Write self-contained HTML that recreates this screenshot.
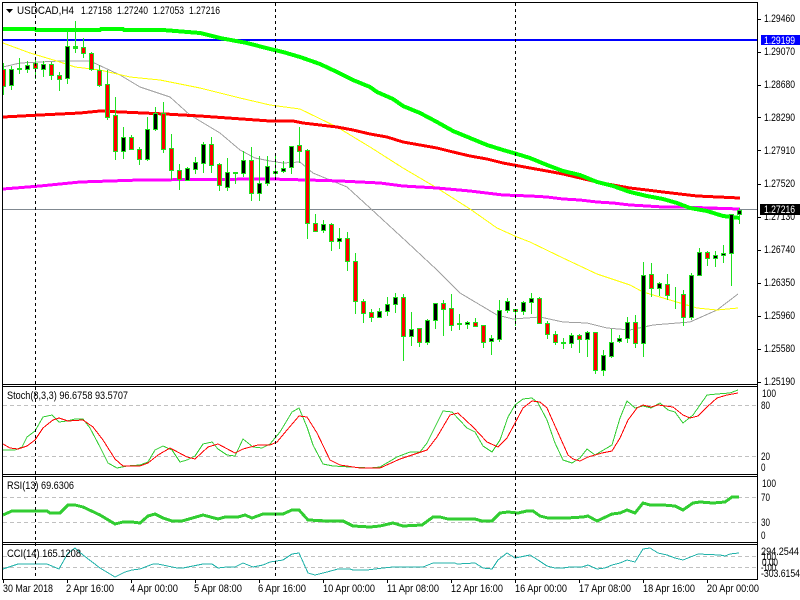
<!DOCTYPE html>
<html><head><meta charset="utf-8"><style>
html,body{margin:0;padding:0;background:#fff;width:800px;height:600px;overflow:hidden}
svg{display:block}
text{font-family:"Liberation Sans",sans-serif;font-size:11px;fill:#000}
</style></head><body>
<svg width="800" height="600" viewBox="0 0 800 600" xmlns="http://www.w3.org/2000/svg">
<rect width="800" height="600" fill="#fff"/>
<g fill="none" shape-rendering="crispEdges">
<path d="M3 405.5H757M3 456.5H757M3 497.5H757M3 522.5H757M3 556.5H757M3 567.5H757" stroke="#c0c0c0" stroke-dasharray="4 3"/>
<path d="M3 209.5H757" stroke="#808890"/>
<rect x="3" y="39" width="754" height="2" fill="#0000ff"/>
<polyline stroke="#a0a0a0" points="3,67 20,63 60,61 90,61 105,68 120,75 140,87 170,97 190,115 220,133 240,150 255,158 270,161 283,163 300,162 313,173 347,187 370,208 407,242 437,270 460,293 497,315 513,319 540,317 563,322 587,323 607,328 630,330 653,325 690,322 717,310 738,294"/>
<polyline stroke="#ffff00" points="3,43 30,53 60,62 75,67 100,70 130,77 160,80 200,88 240,98 270,105 300,109 337,127 370,147 403,168 437,188 470,209 497,228 517,237 530,242 563,258 597,274 630,285 643,292 670,300 697,308 717,310 738,308"/>
<polyline stroke="#ff00ff" stroke-width="3" points="3,189 40,186 80,182 140,180 270,179 307,180 340,181 380,183 403,186 437,188 470,191 503,195 530,196 547,197 563,199 580,200 597,202 613,203 630,205 647,206 663,207 680,207 740,209"/>
<polyline stroke="#ff0000" stroke-width="3" points="3,117 40,115 80,113 100,111 165,114 200,116 270,121 293,121 303,123 320,125 337,127 353,130 370,134 387,137 403,142 420,145 437,148 453,152 470,156 487,159 503,163 530,168 547,171 563,174 580,178 597,182 613,185 630,188 647,190 663,192 680,194 697,196 740,198"/>
<polyline stroke="#00ff00" stroke-width="4" points="3,29 35,29 36,30 100,30 101,29 123,29 124,30 163,30 200,33 220,38 247,43 270,49 283,52 300,57 320,64 337,72 353,80 370,87 377,92 393,99 403,106 420,113 437,122 453,131 470,138 487,145 503,150 517,154 530,158 547,165 563,171 580,175 597,182 613,186 630,192 647,196 663,199 677,203 690,208 707,211 723,216 740,218"/>
<path stroke="#1fe01f" d="M3.5 63V95M11.5 66V90M19.5 58V74M27.5 61V73M35.5 59V79M43.5 61V77M51.5 62V80M59.5 72V91M67.5 30V84M75.5 21V53M83.5 38V58M91.5 52V71M99.5 65V87M107.5 70V120M115.5 97V160M123.5 127V159M131.5 135V150M139.5 147V165M147.5 117V161M155.5 107V131M163.5 102V153M171.5 134V180M179.5 164V190M187.5 167V181M195.5 157V174M203.5 142V173M211.5 137V173M219.5 163V191M227.5 158V191M235.5 172V184M243.5 151V177M251.5 147V201M259.5 156V201M267.5 156V186M275.5 155V180M283.5 161V173M291.5 146V174M299.5 127V163M307.5 149V239M315.5 214V232M323.5 220V233M331.5 223V251M339.5 228V249M347.5 232V271M355.5 253V314M363.5 299V323M371.5 309V322M379.5 308V318M387.5 297V316M395.5 293V313M403.5 294V361M411.5 312V346M419.5 328V347M427.5 319V345M435.5 303V329M443.5 300V336M451.5 294V331M459.5 314V330M467.5 321V329M475.5 318V327M483.5 325V348M491.5 335V355M499.5 300V342M507.5 298V313M515.5 309V326M523.5 301V315M531.5 293V314M539.5 297V324M547.5 321V339M555.5 331V345M563.5 338V349M571.5 333V348M579.5 334V353M587.5 331V357M595.5 332V374M603.5 350V376M611.5 329V358M619.5 335V343M627.5 317V343M635.5 315V348M643.5 262V357M651.5 263V297M659.5 282V296M667.5 274V300M675.5 287V309M683.5 290V326M691.5 273V320M699.5 248V276M707.5 251V266M715.5 251V267M723.5 245V263M731.5 214V286M739.5 208V224"/>
<path stroke="#1fe01f" fill="#ff0000" d="M1.5 69.5h4V86.5h-4zM33.5 63.5h4V68.5h-4zM49.5 64.5h4V75.5h-4zM57.5 75.5h4V79.5h-4zM81.5 47.5h4V53.5h-4zM89.5 53.5h4V69.5h-4zM97.5 70.5h4V85.5h-4zM105.5 84.5h4V117.5h-4zM113.5 115.5h4V151.5h-4zM129.5 137.5h4V149.5h-4zM137.5 149.5h4V159.5h-4zM161.5 113.5h4V149.5h-4zM169.5 148.5h4V170.5h-4zM177.5 170.5h4V179.5h-4zM209.5 144.5h4V165.5h-4zM217.5 164.5h4V185.5h-4zM249.5 160.5h4V193.5h-4zM297.5 145.5h4V151.5h-4zM305.5 150.5h4V223.5h-4zM313.5 223.5h4V231.5h-4zM329.5 224.5h4V241.5h-4zM345.5 238.5h4V261.5h-4zM353.5 261.5h4V301.5h-4zM361.5 301.5h4V313.5h-4zM369.5 312.5h4V317.5h-4zM401.5 297.5h4V336.5h-4zM417.5 328.5h4V342.5h-4zM441.5 303.5h4V309.5h-4zM449.5 308.5h4V325.5h-4zM473.5 322.5h4V326.5h-4zM481.5 325.5h4V342.5h-4zM513.5 309.5h4V311.5h-4zM537.5 298.5h4V323.5h-4zM545.5 323.5h4V334.5h-4zM553.5 334.5h4V342.5h-4zM577.5 335.5h4V339.5h-4zM593.5 332.5h4V370.5h-4zM633.5 322.5h4V343.5h-4zM649.5 274.5h4V288.5h-4zM665.5 284.5h4V295.5h-4zM681.5 294.5h4V317.5h-4zM705.5 252.5h4V258.5h-4z"/>
<path stroke="#1fe01f" fill="#000" d="M9.5 69.5h4V85.5h-4zM25.5 65.5h4V69.5h-4zM41.5 64.5h4V69.5h-4zM65.5 46.5h4V78.5h-4zM121.5 137.5h4V151.5h-4zM145.5 129.5h4V159.5h-4zM153.5 113.5h4V129.5h-4zM185.5 168.5h4V180.5h-4zM193.5 162.5h4V169.5h-4zM201.5 144.5h4V163.5h-4zM225.5 172.5h4V187.5h-4zM241.5 160.5h4V173.5h-4zM257.5 183.5h4V193.5h-4zM265.5 166.5h4V183.5h-4zM273.5 171.5h4V173.5h-4zM281.5 168.5h4V171.5h-4zM289.5 146.5h4V167.5h-4zM321.5 224.5h4V230.5h-4zM337.5 238.5h4V241.5h-4zM377.5 311.5h4V317.5h-4zM385.5 304.5h4V311.5h-4zM393.5 297.5h4V304.5h-4zM409.5 329.5h4V336.5h-4zM425.5 320.5h4V342.5h-4zM433.5 303.5h4V320.5h-4zM465.5 322.5h4V324.5h-4zM489.5 338.5h4V341.5h-4zM497.5 310.5h4V339.5h-4zM505.5 301.5h4V310.5h-4zM521.5 302.5h4V311.5h-4zM529.5 298.5h4V302.5h-4zM569.5 335.5h4V343.5h-4zM585.5 332.5h4V339.5h-4zM601.5 355.5h4V370.5h-4zM609.5 342.5h4V356.5h-4zM617.5 338.5h4V341.5h-4zM625.5 322.5h4V338.5h-4zM641.5 275.5h4V343.5h-4zM657.5 283.5h4V288.5h-4zM689.5 275.5h4V317.5h-4zM697.5 252.5h4V275.5h-4zM713.5 255.5h4V258.5h-4zM721.5 253.5h4V255.5h-4zM729.5 214.5h4V253.5h-4zM737.5 210.5h4V214.5h-4z"/>
<path stroke="#1fe01f" fill="#1fe01f" d="M17.5 68.5h4V69.5h-4zM73.5 46.5h4V48.5h-4zM233.5 172.5h4V173.5h-4zM457.5 323.5h4V324.5h-4zM561.5 342.5h4V343.5h-4z"/>
<polyline stroke="#32cd32" points="3,450 15,450 22,447 27,437 35,431 43,417 52,415 59,422 67,421 75,419 83,419 90,428 100,447 108,463 117,468 127,466 140,465 148,462 155,450 163,446 172,450 180,462 187,460 195,456 203,444 212,442 218,449 227,455 235,456 243,439 253,447 262,448 270,444 280,432 292,412 299,408 307,427 313,445 323,464 333,466 350,467 370,468 380,467 397,457 410,452 420,452 427,443 443,411 452,412 467,428 475,432 483,446 492,452 500,440 508,417 515,405 523,399 532,398 538,403 547,420 555,443 563,460 572,463 580,458 587,449 595,455 612,445 620,418 627,401 635,408 643,406 651,408 660,403 668,410 675,412 683,423 693,415 707,395 717,394 730,393 738,390"/>
<polyline stroke="#ff0000" points="3,444 10,448 18,449 27,446 35,440 43,428 53,420 59,418 68,421 83,420 93,427 103,440 115,459 123,466 140,466 148,463 158,455 170,448 187,457 195,459 208,447 218,444 235,453 243,449 258,445 270,445 277,442 287,430 299,416 307,417 317,433 330,460 340,465 360,468 380,468 400,459 427,450 437,437 450,415 458,413 473,427 487,442 498,447 507,438 515,423 523,408 532,401 540,402 547,408 568,455 573,459 580,461 588,457 602,453 612,451 620,438 628,420 637,408 643,405 651,407 658,405 673,407 683,415 690,418 698,416 707,407 717,398 727,395 738,393"/>
<polyline stroke="#32cd32" stroke-width="3" points="3,515 12,511 47,511 50,513 60,513 68,505 75,505 83,507 100,515 115,524 123,522 132,522 140,523 148,516 155,514 163,518 172,521 182,521 203,515 218,519 225,517 238,517 245,515 252,518 263,514 283,514 292,510 299,510 308,520 327,521 343,521 353,526 370,527 380,526 393,523 403,526 422,525 433,517 440,517 448,519 475,519 482,521 492,521 500,513 508,512 518,513 527,511 533,511 540,516 548,518 567,518 583,517 588,516 597,521 612,514 620,513 627,510 635,513 643,503 650,505 663,505 675,506 683,510 693,503 700,502 713,503 725,502 732,497 739,497"/>
<polyline stroke="#20b2aa" points="3,569 18,564 47,564 59,569 68,553 75,548 83,555 100,568 115,577 125,572 132,570 140,569 153,564 158,564 177,568 183,568 203,564 212,564 218,568 227,567 235,567 243,563 253,567 263,565 270,562 283,560 292,554 299,553 308,573 315,575 327,572 338,569 350,569 353,570 367,570 383,568 393,567 407,567 423,567 433,563 455,563 457,564 475,563 483,568 492,569 498,560 507,553 515,558 530,555 538,560 547,566 555,568 563,568 570,567 582,567 588,565 597,569 605,568 612,565 620,563 627,560 635,562 643,549 650,548 658,553 667,555 675,558 683,560 698,554 720,555 725,556 730,554 739,553"/>
<path stroke="#000" stroke-dasharray="3 3" d="M35.5 3V580M275.5 3V580M515.5 3V580"/>
<rect x="0" y="0" width="2" height="600" fill="#fff"/>
<path stroke="#000" d="M2.5 2V580M757.5 2V580M2 2.5H758M2 384.5H758M2 386.5H758M2 474.5H758M2 476.5H758M2 542.5H758M2 544.5H758M2 579.5H758"/>
<path stroke="#000" d="M3.5 580V583M67.5 580V583M131.5 580V583M195.5 580V583M259.5 580V583M323.5 580V583M387.5 580V583M451.5 580V583M515.5 580V583M579.5 580V583M643.5 580V583M707.5 580V583M758 19.5h3M758 52.5h3M758 85.5h3M758 117.5h3M758 150.5h3M758 184.5h3M758 217.5h3M758 250.5h3M758 283.5h3M758 316.5h3M758 349.5h3M758 382.5h3"/>
<rect x="761" y="35" width="39" height="10" fill="#0000ff"/>
</g>
<polygon points="6,9 13,9 9.5,13" fill="#000"/>
<text x="17" y="14" textLength="57" lengthAdjust="spacingAndGlyphs">USDCAD,H4</text>
<text x="81" y="14" textLength="31" lengthAdjust="spacingAndGlyphs">1.27158</text>
<text x="117" y="14" textLength="31" lengthAdjust="spacingAndGlyphs">1.27240</text>
<text x="153" y="14" textLength="31" lengthAdjust="spacingAndGlyphs">1.27053</text>
<text x="189" y="14" textLength="31" lengthAdjust="spacingAndGlyphs">1.27216</text>
<text x="7" y="399" textLength="121" lengthAdjust="spacingAndGlyphs">Stoch(8,3,3) 96.6758 93.5707</text>
<text x="7" y="489" textLength="67" lengthAdjust="spacingAndGlyphs">RSI(13) 69.6306</text>
<text x="7" y="557" textLength="74" lengthAdjust="spacingAndGlyphs">CCI(14) 165.1208</text>
<text x="764" y="22" textLength="31" lengthAdjust="spacingAndGlyphs">1.29460</text>
<text x="764" y="55" textLength="31" lengthAdjust="spacingAndGlyphs">1.29070</text>
<text x="764" y="88" textLength="31" lengthAdjust="spacingAndGlyphs">1.28680</text>
<text x="764" y="121" textLength="31" lengthAdjust="spacingAndGlyphs">1.28290</text>
<text x="764" y="154" textLength="31" lengthAdjust="spacingAndGlyphs">1.27910</text>
<text x="764" y="187" textLength="31" lengthAdjust="spacingAndGlyphs">1.27520</text>
<text x="764" y="220" textLength="31" lengthAdjust="spacingAndGlyphs">1.27130</text>
<text x="764" y="253" textLength="31" lengthAdjust="spacingAndGlyphs">1.26740</text>
<text x="764" y="286" textLength="31" lengthAdjust="spacingAndGlyphs">1.26350</text>
<text x="764" y="319" textLength="31" lengthAdjust="spacingAndGlyphs">1.25960</text>
<text x="764" y="352" textLength="31" lengthAdjust="spacingAndGlyphs">1.25580</text>
<text x="764" y="385" textLength="31" lengthAdjust="spacingAndGlyphs">1.25190</text>
<text x="764" y="44" textLength="31" lengthAdjust="spacingAndGlyphs" style="fill:#fff">1.29199</text>
<rect x="760" y="204" width="40" height="11" fill="#000"/>
<text x="764" y="213" textLength="31" lengthAdjust="spacingAndGlyphs" style="fill:#fff">1.27216</text>
<text x="762" y="397" textLength="14" lengthAdjust="spacingAndGlyphs">100</text>
<text x="761" y="409" textLength="9" lengthAdjust="spacingAndGlyphs">80</text>
<text x="761" y="460" textLength="9" lengthAdjust="spacingAndGlyphs">20</text>
<text x="761" y="471" textLength="4.5" lengthAdjust="spacingAndGlyphs">0</text>
<text x="762" y="487" textLength="14" lengthAdjust="spacingAndGlyphs">100</text>
<text x="761" y="501" textLength="9" lengthAdjust="spacingAndGlyphs">70</text>
<text x="761" y="526" textLength="9" lengthAdjust="spacingAndGlyphs">30</text>
<text x="761" y="539" textLength="4.5" lengthAdjust="spacingAndGlyphs">0</text>
<text x="761" y="555" textLength="38" lengthAdjust="spacingAndGlyphs">294.2544</text>
<text x="762" y="560" textLength="14" lengthAdjust="spacingAndGlyphs">100</text>
<text x="762" y="566" textLength="16" lengthAdjust="spacingAndGlyphs">0.00</text>
<text x="761" y="571" textLength="15" lengthAdjust="spacingAndGlyphs">-100</text>
<text x="761" y="577" textLength="39" lengthAdjust="spacingAndGlyphs">-303.6154</text>
<text x="3" y="592" textLength="50" lengthAdjust="spacingAndGlyphs">30 Mar 2018</text>
<text x="66" y="592" textLength="48" lengthAdjust="spacingAndGlyphs">2 Apr 16:00</text>
<text x="130" y="592" textLength="48" lengthAdjust="spacingAndGlyphs">4 Apr 00:00</text>
<text x="194" y="592" textLength="48" lengthAdjust="spacingAndGlyphs">5 Apr 08:00</text>
<text x="258" y="592" textLength="48" lengthAdjust="spacingAndGlyphs">6 Apr 16:00</text>
<text x="323" y="592" textLength="52" lengthAdjust="spacingAndGlyphs">10 Apr 00:00</text>
<text x="387" y="592" textLength="52" lengthAdjust="spacingAndGlyphs">11 Apr 08:00</text>
<text x="451" y="592" textLength="52" lengthAdjust="spacingAndGlyphs">12 Apr 16:00</text>
<text x="515" y="592" textLength="52" lengthAdjust="spacingAndGlyphs">16 Apr 00:00</text>
<text x="579" y="592" textLength="52" lengthAdjust="spacingAndGlyphs">17 Apr 08:00</text>
<text x="643" y="592" textLength="52" lengthAdjust="spacingAndGlyphs">18 Apr 16:00</text>
<text x="707" y="592" textLength="52" lengthAdjust="spacingAndGlyphs">20 Apr 00:00</text>
</svg>
</body></html>
